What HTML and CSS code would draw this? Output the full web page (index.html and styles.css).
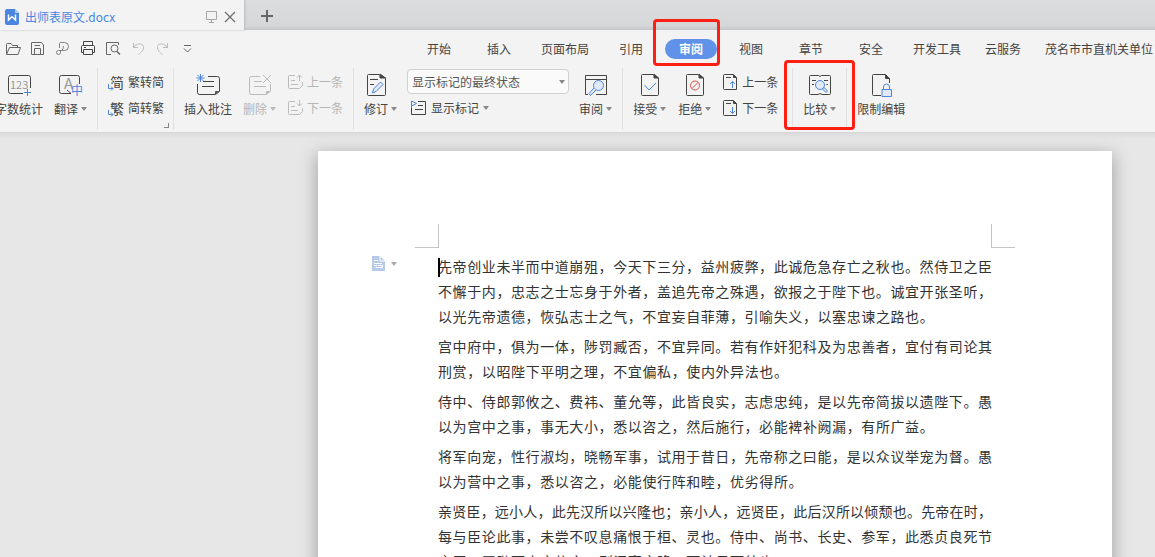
FILE: index.html
```html
<!DOCTYPE html>
<html lang="zh-CN">
<head>
<meta charset="utf-8">
<title>出师表原文.docx</title>
<link rel="stylesheet" href="styles.css">
</head>
<body>
<div class="app">
  <header class="titlebar">
    <div class="doc-tab">
      <svg class="logo" width="14" height="16" viewBox="0 0 14 16"><path d="M2 0H10L14 4V14a2 2 0 0 1-2 2H2a2 2 0 0 1-2-2V2a2 2 0 0 1 2-2z" fill="#4a86e0"/><path d="M10 0L14 4H11a1 1 0 0 1-1-1z" fill="#b9d2f7"/><path d="M3.500 5.500V11L7 7.800 10.500 11V5.500" fill="none" stroke="#fff" stroke-width="1.500"/></svg>
      <span class="doc-name">出师表原文.docx</span>
      <svg width="13" height="13" viewBox="0 0 13 13" fill="none" stroke="#a6a6a6"><path d="M1.500 1.500H11.500V9.500H1.500zM6.500 9.500V12.500M4 12.500H9"/></svg>
      <button class="plain" aria-label="关闭"><svg width="12" height="12" viewBox="0 0 12 12" stroke="#6b6b6b" stroke-width="1.200"><path d="M1 1L11 11M11 1L1 11"/></svg></button>
    </div>
    <button class="plain new-tab" aria-label="新建"><svg width="12" height="12" viewBox="0 0 12 12" stroke="#666" stroke-width="2"><path d="M6 0V12M0 6H12"/></svg></button>
  </header>

  <nav class="menu">
    <div class="quick">
      <button class="plain" aria-label="打开"><svg width="16" height="16" viewBox="0 0 16 16"><path d="M1.500 13V3.500a1 1 0 0 1 1-1H6L7.500 4.500H12.500V6.500M1.500 13.500L4.500 6.500H15.500L13 13.500z"/></svg></button>
      <button class="plain" aria-label="保存"><svg width="16" height="16" viewBox="0 0 16 16"><path d="M1.500 1.500H11.500L13.500 4V13.500H1.500zM4.500 13V7.500H10.500V13M4.500 4.500H10"/></svg></button>
      <button class="plain" aria-label="输出为PDF"><svg width="16" height="16" viewBox="0 0 16 16"><path d="M4.500 7V2.500a1 1 0 0 1 1-1H9.500a4 4 0 0 1 0 8H3.500a2 2 0 1 0 2 2V10C8 9 8.500 7 8.500 5" stroke="#808080"/></svg></button>
      <button class="plain" aria-label="打印"><svg width="16" height="16" viewBox="0 0 16 16"><path d="M3.500 4.500V.5H12.500V4.500M3.500 11.500H1.500V5.500a1 1 0 0 1 1-1H13.500a1 1 0 0 1 1 1V11.500H12.500M3.500 8.500H12.500V13.500H3.500zM4 6.500H6" stroke="#444"/></svg></button>
      <button class="plain" aria-label="打印预览"><svg width="16" height="16" viewBox="0 0 16 16"><path d="M6 13.500H1.500V1.500H13.500V4"/><circle cx="9.500" cy="7.500" r="3.500"/><path d="M12 10.500L15 13.500" stroke-width="1.500"/></svg></button>
      <button class="plain" aria-label="撤销"><svg width="16" height="16" viewBox="0 0 16 16"><path d="M3.500 2V6.500H8M3.500 6.500C6 2.500 12.500 1.500 13.500 5.500 14.200 9 11 11.500 8.500 13.500" stroke="#bbb"/></svg></button>
      <button class="plain" aria-label="恢复"><svg width="16" height="16" viewBox="0 0 16 16"><path d="M12.500 2V6.500H8M12.500 6.500C10 2.500 3.500 1.500 2.500 5.500 1.800 9 5 11.500 7.500 13.500" stroke="#bbb"/></svg></button>
      <button class="plain" aria-label="更多"><svg width="16" height="16" viewBox="0 0 16 16"><path d="M4 4.500H11M4 7.500L7.500 11 11 7.500"/></svg></button>
    </div>
    <div class="tabs">
      <button class="tab">开始</button>
      <button class="tab">插入</button>
      <button class="tab">页面布局</button>
      <button class="tab">引用</button>
      <button class="tab active"><span class="pill">审阅</span><span class="mark mark-tab"></span></button>
      <button class="tab">视图</button>
      <button class="tab">章节</button>
      <button class="tab">安全</button>
      <button class="tab">开发工具</button>
      <button class="tab">云服务</button>
      <button class="tab">茂名市市直机关单位</button>
    </div>
  </nav>

  <section class="ribbon">
    <div class="group first">
      <button class="big">
        <svg width="24" height="24" viewBox="0 0 24 24"><path d="M16 20.500H3.500a2 2 0 0 1-2-2V4.500a2 2 0 0 1 2-2H21.500a2 2 0 0 1 2 2V15"/><text class="glyph" x="3" y="16">123</text><path class="blue" d="M20.500 16V23M17 19.500H24"/></svg>
        <span class="label">字数统计</span>
      </button>
      <button class="big">
        <svg width="24" height="24" viewBox="0 0 24 24"><path d="M12 20.500H2.500a2 2 0 0 1-2-2V4.500a2 2 0 0 1 2-2H18.500a2 2 0 0 1 2 2V11M8 17L12 20.500"/><text class="glyph big-glyph" x="5" y="16">A</text><text class="glyph blue-glyph" x="12" y="22">中</text></svg>
        <span class="label caret">翻译</span>
      </button>
    </div>

    <div class="group narrow">
      <div class="stack">
        <button class="row"><span class="char">简<svg width="6" height="7" viewBox="0 0 6 7"><path class="blue" d="M.5 0V4.500H5M3 2.500L5 4.500 3 6.500"/></svg></span>繁转简</button>
        <button class="row"><span class="char">繁<svg width="6" height="7" viewBox="0 0 6 7"><path class="blue" d="M.5 0V4.500H5M3 2.500L5 4.500 3 6.500"/></svg></span>简转繁</button>
      </div>
      <span class="launcher"></span>
    </div>

    <div class="group">
      <button class="big">
        <svg width="24" height="24" viewBox="0 0 24 24"><path d="M12 3.500H21.500a2 2 0 0 1 2 2V18.500L19.500 21.500H3.500a2 2 0 0 1-2-2V11M7 8.500H18M6 13.500H18"/><path d="M19 22V19a1 1 0 0 1 1-1H23.500z" fill="#555" stroke="none"/><path class="blue" d="M4.500 1V9M.5 5H8.500M1.500 2L7.500 8M7.500 2L1.500 8"/></svg>
        <span class="label">插入批注</span>
      </button>
      <button class="big" disabled>
        <svg width="24" height="24" viewBox="0 0 24 24"><path d="M12 3.500H3.500a2 2 0 0 0-2 2V19.500a2 2 0 0 0 2 2H18L22.500 18V11M6 8.500H14M6 13.500H18M15 2L23 10M23 2L15 10"/><path d="M18 22V19a1 1 0 0 1 1-1H23z" fill="#bbb" stroke="none"/></svg>
        <span class="label caret">删除</span>
      </button>
      <div class="stack">
        <button class="row" disabled><svg width="16" height="16" viewBox="0 0 16 16"><path d="M8 1.500H2.500a1 1 0 0 0-1 1V13.500a1 1 0 0 0 1 1H12.500L15.500 11.500V8M4 6.500H8M4 10.500H11M12.500 7V1M10 3.500L12.500 1 15 3.500"/></svg>上一条</button>
        <button class="row" disabled><svg width="16" height="16" viewBox="0 0 16 16"><path d="M8 1.500H2.500a1 1 0 0 0-1 1V13.500a1 1 0 0 0 1 1H12.500L15.500 11.500V8M4 6.500H8M4 10.500H11M12.500 0V6M10 3.500L12.500 6 15 3.500"/></svg>下一条</button>
      </div>
    </div>

    <div class="group tight">
      <button class="big revise">
        <svg width="24" height="24" viewBox="0 0 24 24"><path d="M15 1.500H4.500a1 1 0 0 0-1 1V21.500a1 1 0 0 0 1 1H20.500a1 1 0 0 0 1-1V5zM6 6.500H14M6 11.500H10"/><path d="M16 1V5H21.500z" fill="#444"/><path d="M8.500 20L9.500 16 16.500 9 19 11.500 12 18.500z" class="blue tint"/></svg>
        <span class="label caret">修订</span>
      </button>
      <div class="stack options">
        <div class="select-wrap">
          <select class="select" aria-label="显示标记状态"><option>显示标记的最终状态</option></select>
        </div>
        <button class="row caret"><svg width="17" height="16" viewBox="0 0 17 16"><path d="M8 1.500H15.500V14.500H1.500V8M8 5.500H13M5 9.500H13"/><path class="blue" d="M1.500 8V1L6.500 3.500 1.500 6"/></svg>显示标记</button>
      </div>
      <button class="big">
        <svg width="24" height="24" viewBox="0 0 24 24"><path d="M4 21.500H1.500V2.500H22.500V21.500H12M1.500 6.500H22.500"/><circle class="blue tint" cx="14.500" cy="12.500" r="5"/><path class="blue tint" d="M10 15L5 20.500 6.500 22.500 12 17"/></svg>
        <span class="label caret">审阅</span>
      </button>
    </div>

    <div class="group spaced">
      <button class="big">
        <svg width="24" height="24" viewBox="0 0 24 24"><path d="M15 1.500H4.500a1 1 0 0 0-1 1V21.500a1 1 0 0 0 1 1H19.500a1 1 0 0 0 1-1V5z"/><path d="M16 1V5H20.500z" fill="#444"/><path class="blue" d="M6.500 12L11 17 18 10"/></svg>
        <span class="label caret">接受</span>
      </button>
      <button class="big">
        <svg width="24" height="24" viewBox="0 0 24 24"><path d="M15 1.500H4.500a1 1 0 0 0-1 1V21.500a1 1 0 0 0 1 1H19.500a1 1 0 0 0 1-1V5z"/><path d="M16 1V5H20.500z" fill="#444"/><circle class="red" cx="12" cy="12.500" r="4.500"/><path class="red" d="M9 15.500L15 9.500"/></svg>
        <span class="label caret">拒绝</span>
      </button>
      <div class="stack">
        <button class="row"><svg width="15" height="16" viewBox="0 0 15 16"><path d="M10 .5H1.500a1 1 0 0 0-1 1V14.500a1 1 0 0 0 1 1H13.500V4zM3 3.500H8"/><path d="M10.500 .5V3.500H13.500z" fill="#444"/><path class="blue" d="M9.500 14V7.500M7 10L9.500 7.500 12 10"/></svg>上一条</button>
        <button class="row"><svg width="15" height="16" viewBox="0 0 15 16"><path d="M10 .5H1.500a1 1 0 0 0-1 1V14.500a1 1 0 0 0 1 1H13.500V4zM3 3.500H8"/><path d="M10.500 .5V3.500H13.500z" fill="#444"/><path class="blue" d="M9.500 7V13.500M7 11L9.500 13.500 12 11"/></svg>下一条</button>
      </div>
    </div>

    <div class="group">
      <button class="big">
        <svg width="24" height="24" viewBox="0 0 24 24"><path d="M12 3.500L10.500 2.500H2.500a1 1 0 0 0-1 1V20.500a1 1 0 0 0 1 1H10L12 20.500 14 21.500H21.500a1 1 0 0 0 1-1V3.500a1 1 0 0 0-1-1H13.500zM4 7.500H8M4 11.500H6M16 7.500H20M18.500 11.500H20"/><circle class="blue tint" cx="12" cy="12" r="4.500"/><path class="blue tint" d="M14.500 16L16 14.500 19.500 18 18 19.500z"/></svg>
        <span class="label caret">比较</span>
      </button>
      <span class="mark mark-group"></span>
    </div>

    <div class="group">
      <button class="big">
        <svg width="24" height="24" viewBox="0 0 24 24"><path d="M12 22.500H4.500a1 1 0 0 1-1-1V2.500a1 1 0 0 1 1-1H16L20.500 5.500V10"/><path d="M16.500 1.500V5.500H20.500z" fill="#444"/><path class="blue" d="M14.500 16V14a3 3 0 0 1 6 0V16"/><path class="blue tint" d="M13 16.500H22.500V23.500H13z"/></svg>
        <span class="label">限制编辑</span>
      </button>
    </div>
  </section>

  <main class="workspace">
    <article class="page">
      <span class="corner corner-left"></span>
      <span class="corner corner-right"></span>
      <button class="plain page-tool caret" aria-label="段落布局"><svg width="13" height="15" viewBox="0 0 13 15"><path d="M0 0H8L13 5V15H0z" fill="#b7cbe8"/><path d="M8 0V5H13M2 4.500H6M2 7.500H10M2 9.500H5M3.500 11.500H10.500V9.500H6" fill="none" stroke="#fff"/></svg></button>
      <p class="para">
        <span class="line"><span class="cursor"></span>先帝创业未半而中道崩殂，今天下三分，益州疲弊，此诚危急存亡之秋也。然侍卫之臣</span>
        <span class="line">不懈于内，忠志之士忘身于外者，盖追先帝之殊遇，欲报之于陛下也。诚宜开张圣听，</span>
        <span class="line" style="--blank:4">以光先帝遗德，恢弘志士之气，不宜妄自菲薄，引喻失义，以塞忠谏之路也。</span>
      </p>
      <p class="para">
        <span class="line">宫中府中，俱为一体，陟罚臧否，不宜异同。若有作奸犯科及为忠善者，宜付有司论其</span>
        <span class="line" style="--blank:14">刑赏，以昭陛下平明之理，不宜偏私，使内外异法也。</span>
      </p>
      <p class="para">
        <span class="line">侍中、侍郎郭攸之、费祎、董允等，此皆良实，志虑忠纯，是以先帝简拔以遗陛下。愚</span>
        <span class="line" style="--blank:4">以为宫中之事，事无大小，悉以咨之，然后施行，必能裨补阙漏，有所广益。</span>
      </p>
      <p class="para">
        <span class="line">将军向宠，性行淑均，晓畅军事，试用于昔日，先帝称之曰能，是以众议举宠为督。愚</span>
        <span class="line" style="--blank:13">以为营中之事，悉以咨之，必能使行阵和睦，优劣得所。</span>
      </p>
      <p class="para">
        <span class="line">亲贤臣，远小人，此先汉所以兴隆也；亲小人，远贤臣，此后汉所以倾颓也。先帝在时，</span>
        <span class="line">每与臣论此事，未尝不叹息痛恨于桓、灵也。侍中、尚书、长史、参军，此悉贞良死节</span>
        <span class="line" style="--blank:14">之臣，愿陛下亲之信之，则汉室之隆，可计日而待也。</span>
      </p>
    </article>
  </main>
</div>
</body>
</html>
```

FILE: styles.css
```css
* { box-sizing: border-box; }

body {
  margin: 0;
  font-family: "Noto Sans CJK SC", sans-serif;
  font-size: 12px;
  line-height: 18px;
  color: #444;
}

button {
  font: inherit;
  color: inherit;
  background: none;
  border: 0;
  padding: 0;
}

svg { display: block; flex: none; }

.app {
  display: flex;
  flex-direction: column;
  height: 100vh;
  overflow: hidden;
  background: #f3f3f3;
}

.plain { display: flex; align-items: center; }

/* Title bar */
.titlebar {
  display: flex;
  height: 30px;
  background: linear-gradient(#dcddde, #d6d7d8 26px, #c4c5c6);
}

.doc-tab {
  display: flex;
  align-items: center;
  gap: 6px;
  width: 244px;
  padding: 3px 8px 0 5px;
  background: #f3f3f3;
  box-shadow: 1px 0 2px #bbb;
}

.doc-name { flex: 1; color: #4a86e0; }

.new-tab { padding: 2px 16px 0 17px; }

/* Menu row */
.menu {
  display: flex;
  align-items: center;
  height: 36px;
  padding-top: 1px;
}

.quick {
  display: flex;
  flex: 0 0 409px;
  gap: 9px;
  padding-left: 5px;
}

.quick svg { fill: none; stroke: #666; }

.tabs { display: flex; flex: 1; min-width: 0; }

.tab {
  flex: none;
  min-width: 60px;
  padding: 0 12px;
  line-height: 20px;
  white-space: nowrap;
}

.tab.active { position: relative; padding: 0 4px; }

.pill {
  display: block;
  border-radius: 10px;
  background: #5f92e8;
  color: #fff;
  font-weight: bold;
}

/* Red highlight frames */
.mark {
  position: absolute;
  z-index: 2;
  border: 3px solid #fc1f14;
  border-radius: 4px;
  pointer-events: none;
}

.mark-tab { inset: -20px 1px -7px -8px; }
.mark-group { inset: -8px -9px 0 -9px; }

/* Ribbon */
.ribbon {
  display: flex;
  height: 67px;
  padding: 2px 0;
  border-bottom: 1px solid #d6d6d6;
}

.group {
  position: relative;
  display: flex;
  flex: none;
  gap: 11px;
  padding: 0 10px;
  border-left: 1px solid #e2e2e2;
}

.group.first { margin-left: -5px; padding-left: 0; border-left: 0; }
.group.narrow { padding-right: 9px; }
.group.tight { gap: 10px; }
.group.spaced { gap: 12px; padding-right: 14px; }

.ribbon svg { fill: none; stroke: #444; }
.ribbon .blue { stroke: #4f86dc; }
.ribbon .tint { fill: #dfe9f8; }
.ribbon .red { stroke: #d9534f; }
.ribbon button:disabled { color: #b5b5b5; }
.ribbon button:disabled svg { stroke: #bbb; }

.glyph { font-size: 11px; fill: #999; stroke: none; }
.big-glyph { font-size: 15px; }
.ribbon .blue-glyph { font-size: 12px; fill: #4f86dc; }

.big {
  display: flex;
  flex-direction: column;
  align-items: center;
  gap: 3px;
  padding-top: 5px;
}

/* The drop-down arrow of this label sits outside the icon's centring. */
.revise { align-items: flex-start; }

.label { white-space: nowrap; }

.caret { display: flex; align-items: center; }

.caret::after {
  content: "";
  margin-left: 3px;
  border: 3px solid transparent;
  border-top: 4px solid #888;
  border-bottom: 0;
}

:disabled .caret::after { border-top-color: #bbb; }

.stack { display: flex; flex-direction: column; padding-top: 1px; }

.row {
  display: flex;
  align-items: center;
  gap: 4px;
  height: 26px;
  white-space: nowrap;
}

.row.caret::after { margin-left: 0; }

.char { position: relative; width: 16px; font-size: 14px; text-align: right; }
.char svg { position: absolute; left: 0; bottom: 0; background: #f3f3f3; }

.launcher {
  position: absolute;
  right: 4px;
  bottom: 2px;
  width: 5px;
  height: 5px;
  border: solid #888;
  border-width: 0 1px 1px 0;
}

.select-wrap { position: relative; margin-bottom: 1px; }

.select-wrap::after {
  content: "";
  position: absolute;
  right: 4px;
  top: 11px;
  border: 3px solid transparent;
  border-top: 4px solid #888;
  border-bottom: 0;
}

.select {
  display: block;
  appearance: none;
  width: 162px;
  height: 25px;
  padding: 0 4px;
  border: 1px solid #d0d0d0;
  border-radius: 4px;
  background: #fafafa;
  color: #555;
  font: inherit;
}

.options .row { padding-left: 3px; height: 25px; }

/* Document area */
.workspace {
  flex: 1;
  min-height: 0;
  overflow: hidden;
  padding: 18px 0 0 275px;
  background: linear-gradient(#dcdcdc, #e7e7e7 6px);
}

.page {
  position: relative;
  max-width: 794px;
  min-height: 1123px;
  margin: 0 auto;
  padding: 103px 120px;
  background: #fff;
  box-shadow: 0 5px 16px 2px #a8a8a8;
  color: #333;
  font-size: 14px;
  line-height: 25px;
}

.corner {
  position: absolute;
  top: 73px;
  width: 24px;
  height: 24px;
  border: 0 solid #c4c4c4;
  border-bottom-width: 1px;
}

.corner-left { left: 97px; border-right-width: 1px; }
.corner-right { right: 97px; border-left-width: 1px; }

.page-tool { position: absolute; left: 54px; top: 105px; }
.page-tool::after { margin-left: 6px; border-top-color: #aaa; }

.para { margin: 0 0 5px; }

/* Every line sits on a grid of 38 character cells; --blank is the number left empty. */
.line {
  position: relative;
  display: block;
  padding-right: calc(100% / 38 * var(--blank, 0));
  text-align: justify;
  text-align-last: justify;
  white-space: nowrap;
}

.cursor {
  position: absolute;
  left: 0;
  top: 4px;
  width: 2px;
  height: 19px;
  background: #000;
}
```
